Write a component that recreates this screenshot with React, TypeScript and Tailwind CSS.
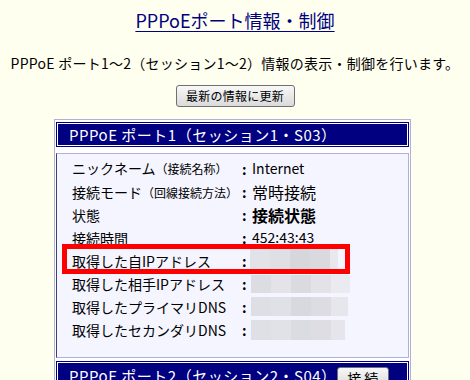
import React from "react";

function Mosaic({ blocks, h }: { blocks: string[]; h: string }) {
  return <div className={"flex " + h}>{blocks.map((b, i) => <div key={i} className={b} />)}</div>;
}

function Row({ label, value }: { label: React.ReactNode; value: React.ReactNode }) {
  return (
    <div className="grid h-[23px] grid-cols-[168px_12px_1fr] items-center">
      <div className="whitespace-nowrap text-[14px] leading-[18px]">{label}</div>
      <div className="pl-[2px] text-[14px] font-bold leading-[18px]">:</div>
      <div className="flex items-center">{value}</div>
    </div>
  );
}

export default function App() {
  return (
    <div className="h-[380px] w-[470px] overflow-hidden bg-[#fffff0] font-['Noto_Sans_CJK_JP','Noto_Sans',sans-serif] text-black">
      <div className="pt-[8px] text-center leading-[24px]">
        <span className="text-[18px] text-[#000080] underline underline-offset-[3px]">PPPoEポート情報・制御</span>
      </div>
      <p className="mt-[21px] whitespace-nowrap text-center text-[14px] leading-[18px] tracking-[0.25px]">
        PPPoE ポート1～2（セッション1～2）情報の表示・制御を行います。
      </p>
      <div className="mt-[13px] flex justify-center">
        <button className="h-[22px] w-[119px] rounded-[3px] border border-[#707070] bg-gradient-to-b from-[#f8f8f8] to-[#dadada] text-[12px] leading-none tracking-[0.25px] text-black">
          最新の情報に更新
        </button>
      </div>

      <div className="ml-[54px] mt-[12px] w-[357px] border border-b-0 border-[#b0b0d8] bg-white px-[1px] pt-[2px]">
        <div className="flex h-[25px] items-center whitespace-nowrap border border-[#000080] bg-[#000080] pl-[12px] text-[15px] leading-none tracking-[0.5px] text-white shadow-[inset_0_0_0_1px_#ffffff]">
          PPPoE ポート1（セッション1・S03）
        </div>

        <div className="relative mt-[6px] h-[205px] border border-[#b0b0d8] border-l-[#404070] bg-[#f5f5ff] pl-[15px] pt-[3px]">
          <Row
            label={<>ニックネーム<span className="text-[12px]">（接続名称）</span></>}
            value={<span className="text-[14px]">Internet</span>}
          />
          <Row
            label={<>接続モード<span className="text-[12px]">（回線接続方法）</span></>}
            value={<span className="text-[16px]">常時接続</span>}
          />
          <Row label="状態" value={<span className="text-[16px] font-bold">接続状態</span>} />
          <Row label="接続時間" value={<span className="text-[14px]">452:43:43</span>} />
          <Row
            label="取得した自IPアドレス"
            value={
              <Mosaic
                h="h-[20px] -mt-[4px] -ml-[2px]"
                blocks={[
                  "w-[20px] bg-[#e2e2e9]",
                  "w-[20px] bg-[#dfdfe6]",
                  "w-[20px] bg-[#d6d6dd]",
                  "w-[20px] bg-[#d9d9df]",
                  "w-[8px] bg-[#e8e8ee]",
                ]}
              />
            }
          />
          <Row
            label="取得した相手IPアドレス"
            value={
              <Mosaic
                h="h-[18px] -ml-[1px]"
                blocks={[
                  "w-[20px] bg-[#dcdce3]",
                  "w-[20px] bg-[#e3e3e9]",
                  "w-[20px] bg-[#dadae1]",
                  "w-[20px] bg-[#e2e2e8]",
                  "w-[19px] bg-[#eaeaf0]",
                ]}
              />
            }
          />
          <Row
            label="取得したプライマリDNS"
            value={
              <Mosaic
                h="h-[19px] -ml-[1px]"
                blocks={[
                  "w-[20px] bg-[#dedee5]",
                  "w-[20px] bg-[#e0e0e7]",
                  "w-[20px] bg-[#d8d8df]",
                  "w-[20px] bg-[#dcdce2]",
                  "w-[17px] bg-[#e6e6ec]",
                ]}
              />
            }
          />
          <Row
            label="取得したセカンダリDNS"
            value={
              <Mosaic
                h="h-[20px] -ml-[1px]"
                blocks={[
                  "w-[20px] bg-[#dfdfe6]",
                  "w-[20px] bg-[#e1e1e8]",
                  "w-[20px] bg-[#dbdbe2]",
                  "w-[20px] bg-[#dddde3]",
                  "w-[14px] bg-[#e5e5eb]",
                ]}
              />
            }
          />
          <div className="pointer-events-none absolute left-[5px] top-[90px] h-[30px] w-[288px] border-[5px] border-[#ff0000]" />
        </div>

        <div className="mt-[3px] flex h-[25px] items-start justify-between whitespace-nowrap border border-[#000080] bg-[#000080] pl-[12px] pr-[19px] text-[15px] leading-none tracking-[0.5px] text-white shadow-[inset_0_0_0_1px_#ffffff]">
          <span className="mt-[6px]">PPPoE ポート2（セッション2・S04）</span>
          <button className="mt-[5px] h-[21px] w-[55px] rounded-[3px] border border-[#707070] bg-gradient-to-b from-[#f8f8f8] to-[#dadada] text-[14px] leading-none tracking-normal text-black">
            接 続
          </button>
        </div>
      </div>
    </div>
  );
}
